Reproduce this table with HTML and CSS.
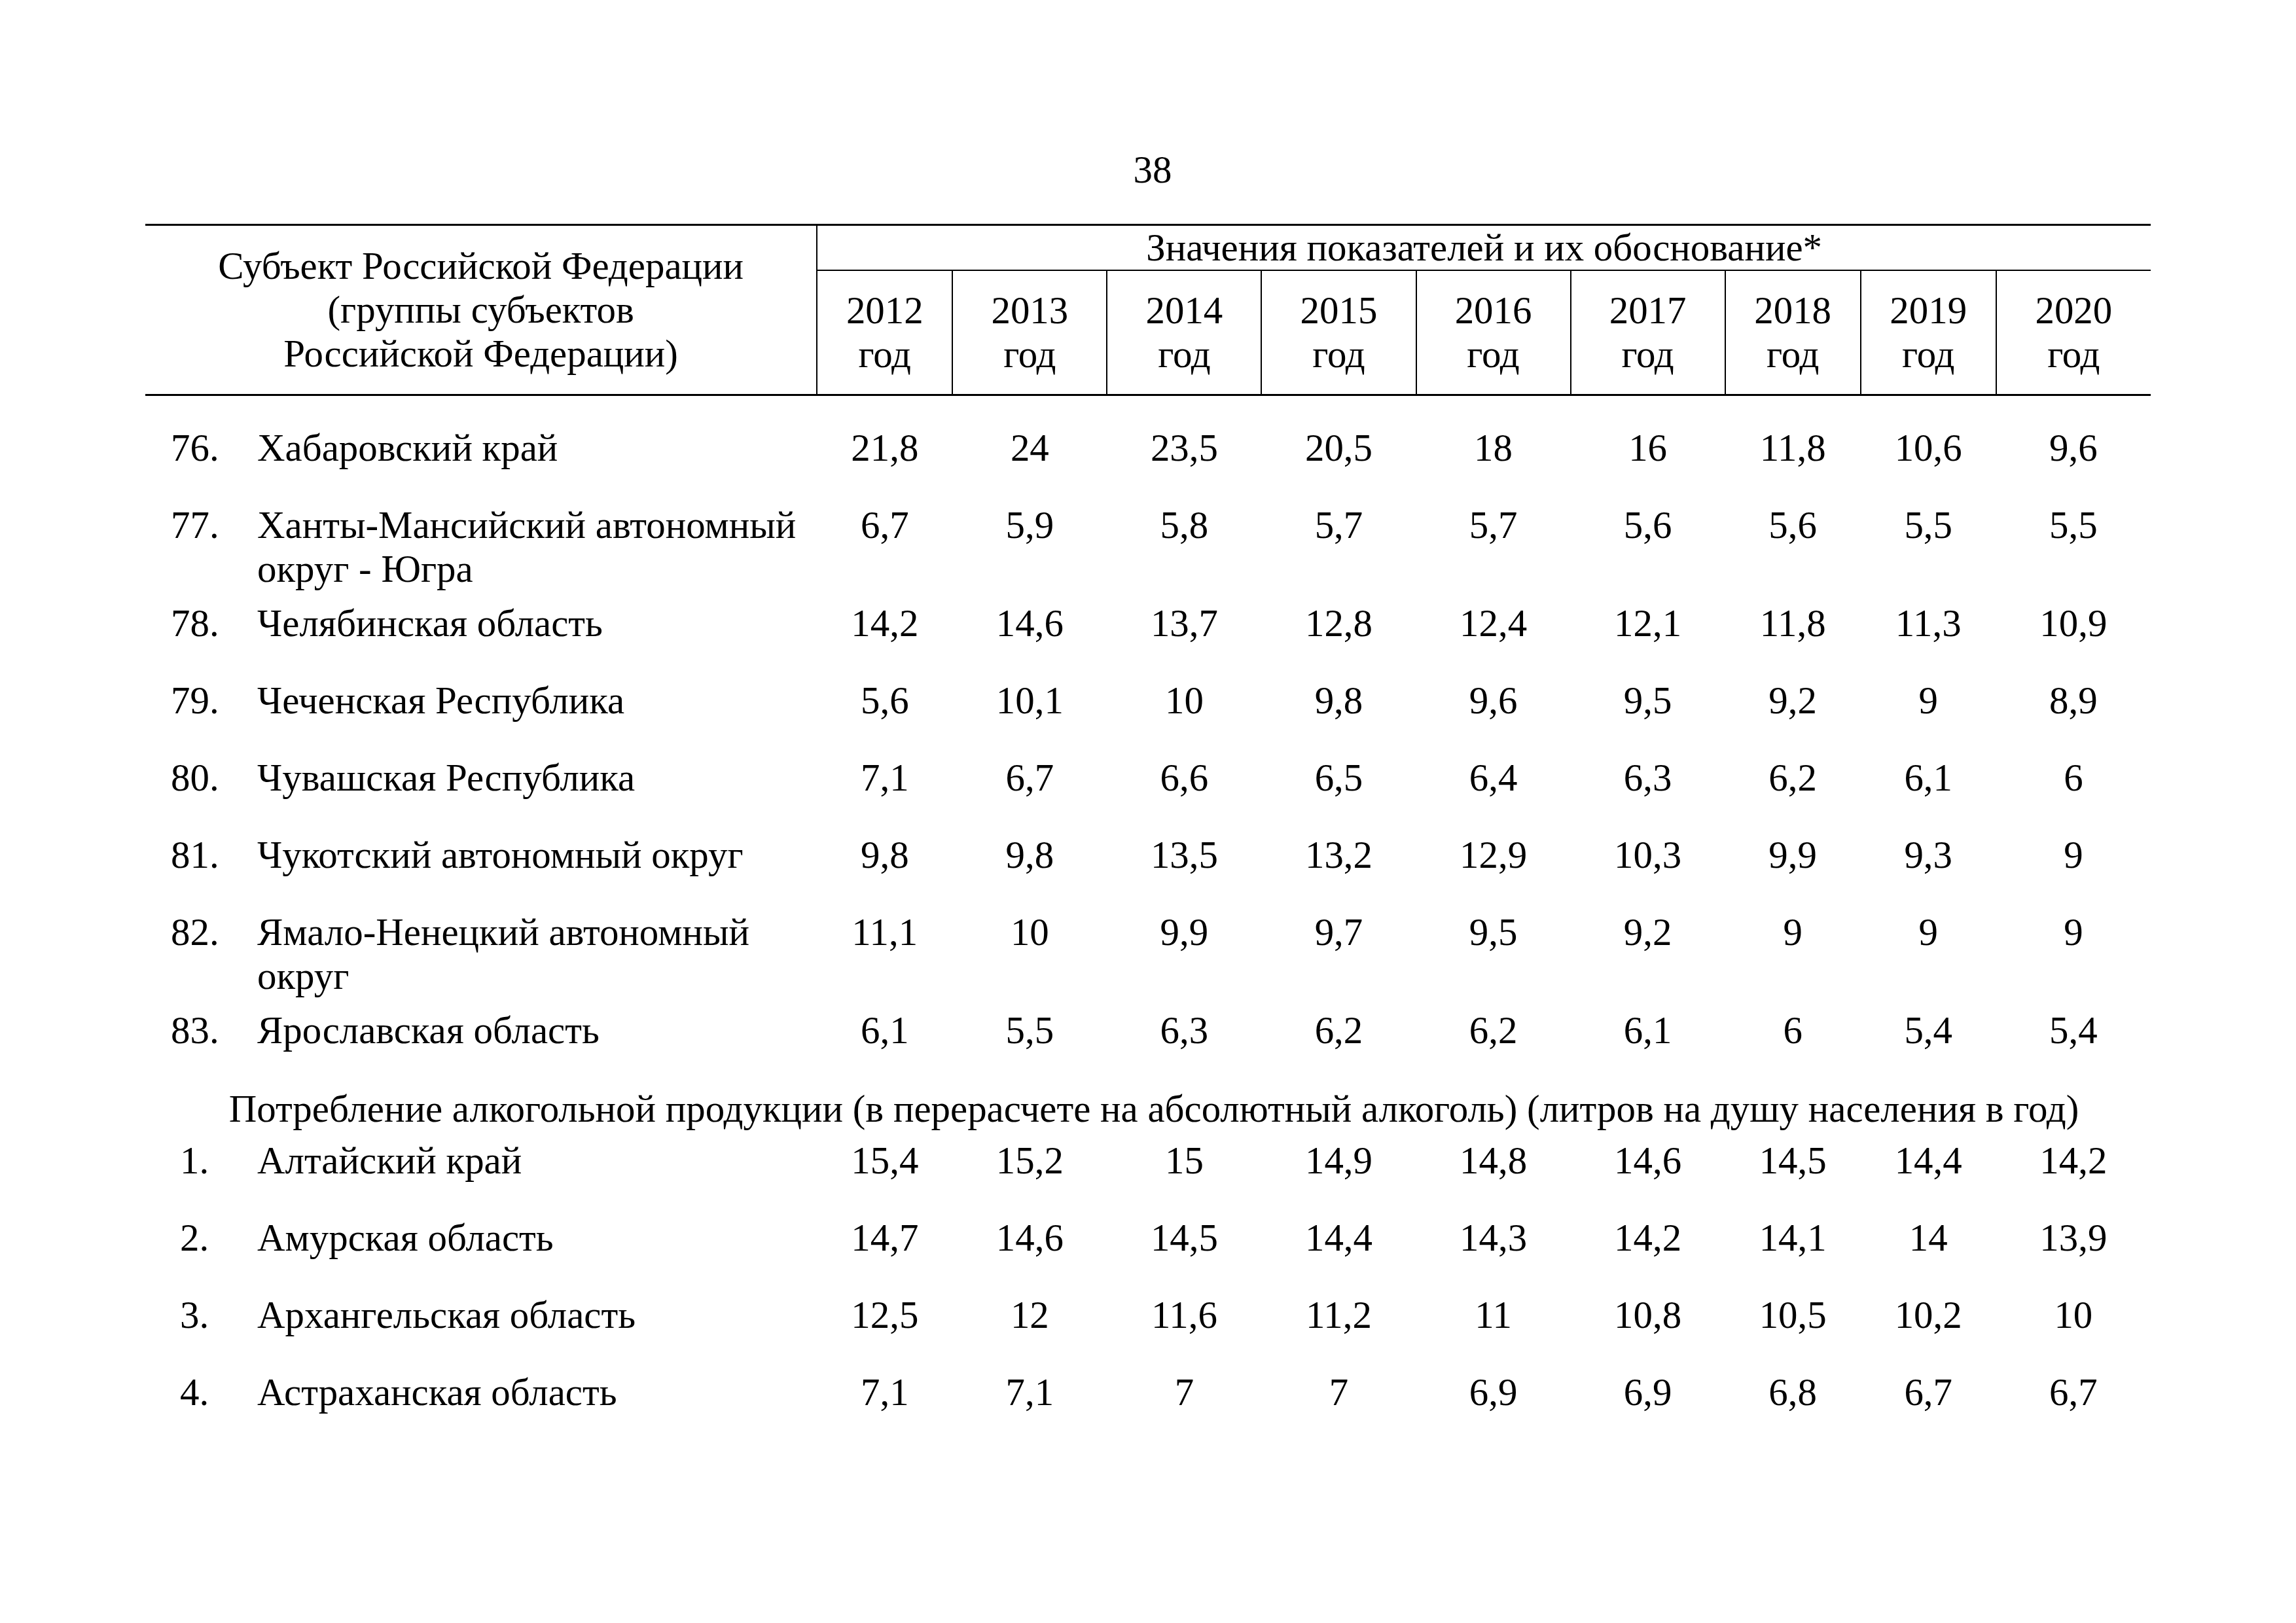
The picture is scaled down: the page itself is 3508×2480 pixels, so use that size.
FILE: index.html
```html
<!DOCTYPE html>
<html lang="ru">
<head>
<meta charset="utf-8">
<title>38</title>
<link rel="stylesheet" href="styles.css">
</head>
<body>
<div class="page">
  <div class="page-num">38</div>
  <table class="data">
    <colgroup>
      <col class="c-subj">
      <col class="c-narrow"><col class="c-wide"><col class="c-wide"><col class="c-wide"><col class="c-wide"><col class="c-wide"><col class="c-narrow"><col class="c-narrow"><col class="c-wide">
    </colgroup>
    <thead>
      <tr class="hr1">
        <th rowspan="2" class="subj">Субъект Российской Федерации<br>(группы субъектов<br>Российской Федерации)</th>
        <th colspan="9" class="vals">Значения показателей и их обоснование*</th>
      </tr>
      <tr class="hr2">
        <th class="yr first">2012<br>год</th>
        <th class="yr">2013<br>год</th>
        <th class="yr">2014<br>год</th>
        <th class="yr">2015<br>год</th>
        <th class="yr">2016<br>год</th>
        <th class="yr">2017<br>год</th>
        <th class="yr">2018<br>год</th>
        <th class="yr">2019<br>год</th>
        <th class="yr">2020<br>год</th>
      </tr>
    </thead>
    <tbody>
      <tr class="spacer"><td colspan="10"></td></tr>
      <tr class="row">
        <td class="region"><span class="num">76.</span><span class="name">Хабаровский край</span></td>
        <td>21,8</td><td>24</td><td>23,5</td><td>20,5</td><td>18</td><td>16</td><td>11,8</td><td>10,6</td><td>9,6</td>
      </tr>
      <tr class="row">
        <td class="region"><span class="num">77.</span><span class="name">Ханты-Мансийский автономный округ - Югра</span></td>
        <td>6,7</td><td>5,9</td><td>5,8</td><td>5,7</td><td>5,7</td><td>5,6</td><td>5,6</td><td>5,5</td><td>5,5</td>
      </tr>
      <tr class="row">
        <td class="region"><span class="num">78.</span><span class="name">Челябинская область</span></td>
        <td>14,2</td><td>14,6</td><td>13,7</td><td>12,8</td><td>12,4</td><td>12,1</td><td>11,8</td><td>11,3</td><td>10,9</td>
      </tr>
      <tr class="row">
        <td class="region"><span class="num">79.</span><span class="name">Чеченская Республика</span></td>
        <td>5,6</td><td>10,1</td><td>10</td><td>9,8</td><td>9,6</td><td>9,5</td><td>9,2</td><td>9</td><td>8,9</td>
      </tr>
      <tr class="row">
        <td class="region"><span class="num">80.</span><span class="name">Чувашская Республика</span></td>
        <td>7,1</td><td>6,7</td><td>6,6</td><td>6,5</td><td>6,4</td><td>6,3</td><td>6,2</td><td>6,1</td><td>6</td>
      </tr>
      <tr class="row">
        <td class="region"><span class="num">81.</span><span class="name">Чукотский автономный округ</span></td>
        <td>9,8</td><td>9,8</td><td>13,5</td><td>13,2</td><td>12,9</td><td>10,3</td><td>9,9</td><td>9,3</td><td>9</td>
      </tr>
      <tr class="row">
        <td class="region"><span class="num">82.</span><span class="name">Ямало-Ненецкий автономный округ</span></td>
        <td>11,1</td><td>10</td><td>9,9</td><td>9,7</td><td>9,5</td><td>9,2</td><td>9</td><td>9</td><td>9</td>
      </tr>
      <tr class="row">
        <td class="region"><span class="num">83.</span><span class="name">Ярославская область</span></td>
        <td>6,1</td><td>5,5</td><td>6,3</td><td>6,2</td><td>6,2</td><td>6,1</td><td>6</td><td>5,4</td><td>5,4</td>
      </tr>
      <tr class="section">
        <td colspan="10">Потребление алкогольной продукции (в перерасчете на абсолютный алкоголь) (литров на душу населения в год)</td>
      </tr>
      <tr class="row">
        <td class="region"><span class="num short">1.</span><span class="name">Алтайский край</span></td>
        <td>15,4</td><td>15,2</td><td>15</td><td>14,9</td><td>14,8</td><td>14,6</td><td>14,5</td><td>14,4</td><td>14,2</td>
      </tr>
      <tr class="row">
        <td class="region"><span class="num short">2.</span><span class="name">Амурская область</span></td>
        <td>14,7</td><td>14,6</td><td>14,5</td><td>14,4</td><td>14,3</td><td>14,2</td><td>14,1</td><td>14</td><td>13,9</td>
      </tr>
      <tr class="row">
        <td class="region"><span class="num short">3.</span><span class="name">Архангельская область</span></td>
        <td>12,5</td><td>12</td><td>11,6</td><td>11,2</td><td>11</td><td>10,8</td><td>10,5</td><td>10,2</td><td>10</td>
      </tr>
      <tr class="row">
        <td class="region"><span class="num short">4.</span><span class="name">Астраханская область</span></td>
        <td>7,1</td><td>7,1</td><td>7</td><td>7</td><td>6,9</td><td>6,9</td><td>6,8</td><td>6,7</td><td>6,7</td>
      </tr>
    </tbody>
  </table>
</div>
</body>
</html>
```

FILE: styles.css
```css
html, body {
  margin: 0;
  padding: 0;
  background: #ffffff;
}

body {
  width: 3508px;
  height: 2480px;
  overflow: hidden;
  color: #000000;
  font-family: "Liberation Serif", "Times New Roman", serif;
  font-size: 58.9px;
  line-height: 67px;
}

.page {
  padding: 226px 0 0 222px;
  width: 3064px;
}

.page-num {
  text-align: center;
  padding-left: 14px;
  margin-bottom: 49px;
}

.data {
  width: 3064px;
  table-layout: fixed;
  border-collapse: collapse;
  border-spacing: 0;
}

.c-subj { width: 1026px; }
.c-narrow { width: 207px; }
.c-wide { width: 236px; }

.data th {
  font-weight: normal;
  padding: 0;
  text-align: center;
  vertical-align: middle;
}

.data thead {
  border-top: 3px solid #000;
  border-bottom: 3px solid #000;
}

.hr1 { height: 68px; }
.hr2 { height: 190px; }

.subj {
  border-right: 2px solid #000;
}

.vals {
  border-bottom: 2px solid #000;
}

.yr {
  border-left: 2px solid #000;
}

.data td {
  padding: 0 0 16px 0;
  vertical-align: top;
  text-align: center;
}

.spacer { height: 48px; }
.spacer td { padding: 0; }

.row { height: 118px; }

.data td.region {
  text-align: left;
  padding-left: 39px;
}

.region .num {
  float: left;
  width: 132px;
}

.region .num.short {
  width: 118px;
  padding-left: 14px;
}

.region .name {
  display: block;
  overflow: hidden;
  padding-right: 16px;
}

.data .section td {
  padding: 2px 0 12px 18px;
  text-align: center;
}
```
